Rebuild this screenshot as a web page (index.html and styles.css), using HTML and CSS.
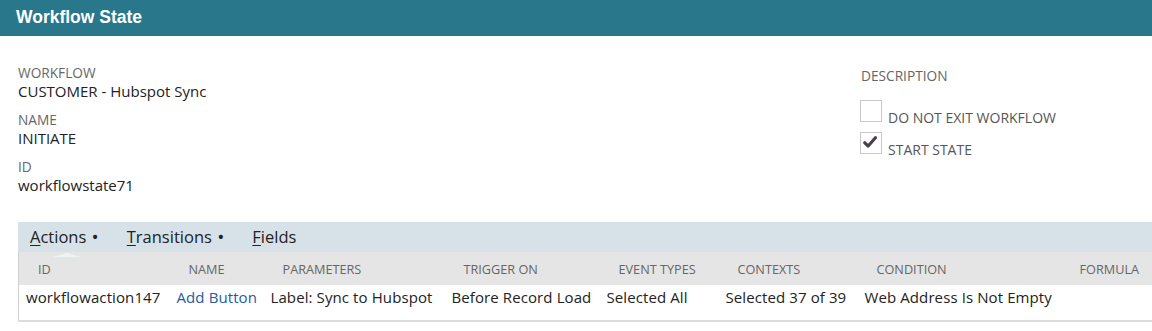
FILE: index.html
```html
<!DOCTYPE html>
<html>
<head>
<meta charset="utf-8">
<link rel="stylesheet" href="styles.css">
</head>
<body>
<div class="titlebar">Workflow State</div>
<div class="fields">
  <div class="col-left">
    <div class="field"><div class="label">WORKFLOW</div><div class="value">CUSTOMER - Hubspot Sync</div></div>
    <div class="field"><div class="label">NAME</div><div class="value">INITIATE</div></div>
    <div class="field"><div class="label">ID</div><div class="value">workflowstate71</div></div>
  </div>
  <div class="col-right">
    <div class="label desc">DESCRIPTION</div>
    <div class="check-row"><span class="box"></span><span class="check-label">DO NOT EXIT WORKFLOW</span></div>
    <div class="check-row"><span class="box checked"><svg viewBox="0 0 14 12" width="14" height="12"><path d="M1.8 6.8 L5.2 10 L12.4 1.8" fill="none" stroke="#4a3f4c" stroke-width="3.2" stroke-linecap="round" stroke-linejoin="round"/></svg></span><span class="check-label">START STATE</span></div>
  </div>
</div>
<div class="subtabs">
  <div class="tabs">
    <span class="tab active"><u>A</u>ctions <span class="dot">•</span></span>
    <span class="tab"><u>T</u>ransitions <span class="dot">•</span></span>
    <span class="tab"><u>F</u>ields</span>
  </div>
  <table class="grid">
    <colgroup>
      <col class="c1"><col class="c2"><col class="c3"><col class="c4"><col class="c5"><col class="c6"><col class="c7"><col class="c8">
    </colgroup>
    <thead>
      <tr>
        <th>ID</th>
        <th>NAME</th>
        <th>PARAMETERS</th>
        <th>TRIGGER ON</th>
        <th>EVENT TYPES</th>
        <th>CONTEXTS</th>
        <th>CONDITION</th>
        <th>FORMULA</th>
      </tr>
    </thead>
    <tbody>
      <tr>
        <td>workflowaction147</td>
        <td><a class="link">Add Button</a></td>
        <td>Label: Sync to Hubspot</td>
        <td>Before Record Load</td>
        <td>Selected All</td>
        <td>Selected 37 of 39</td>
        <td>Web Address Is Not Empty</td>
        <td></td>
      </tr>
    </tbody>
  </table>
</div>
</body>
</html>
```

FILE: styles.css
```css
html, body {
  margin: 0;
  padding: 0;
  background: #ffffff;
  overflow: hidden;
}
body {
  font-family: "Open Sans", "Noto Sans", sans-serif;
  color: #222222;
}
.titlebar {
  height: 36px;
  box-sizing: border-box;
  background: #28778a;
  color: #ffffff;
  font-family: "Liberation Sans", Arial, sans-serif;
  font-weight: bold;
  font-size: 17.5px;
  line-height: 34px;
  padding-left: 16px;
}
.fields {
  display: flex;
  padding: 28px 0 0 18px;
  height: 158px;
  box-sizing: border-box;
}
.col-left {
  width: 843px;
  display: flex;
  flex-direction: column;
  gap: 10px;
}
.label {
  font-size: 13.7px;
  line-height: 17px;
  color: #666666;
}
.value {
  font-size: 15px;
  line-height: 19px;
  color: #222222;
  margin-top: 1px;
}
.col-right {
  display: flex;
  flex-direction: column;
}
.desc {
  margin-top: 3px;
  margin-bottom: 17px;
}
.check-row {
  display: flex;
  align-items: flex-end;
  height: 21px;
  margin-bottom: 11px;
  margin-left: -1px;
}
.box {
  width: 20px;
  height: 20px;
  border: 1px solid #c8c8c8;
  background: #ffffff;
  display: flex;
  align-items: center;
  justify-content: center;
  margin-right: 6px;
}
.box svg {
  margin-top: -3px;
  margin-left: -2px;
}
.check-label {
  font-size: 14px;
  line-height: 14px;
  color: #555555;
  margin-bottom: -3px;
}
.subtabs {
  margin-left: 18px;
  margin-top: 28px;
}
.tabs {
  height: 30px;
  background: #d6e2e8;
  display: flex;
  align-items: center;
  padding-left: 12px;
  gap: 28px;
  box-sizing: border-box;
}
.tab {
  position: relative;
  font-size: 16.5px;
  color: #222222;
  line-height: 20px;
  margin-top: -1px;
}
.tab .dot {
  font-size: 19px;
  margin-left: 1px;
  vertical-align: -1px;
}
.tab u {
  text-underline-offset: 2px;
}
.tab.active::after {
  content: "";
  position: absolute;
  left: 37px;
  bottom: -10px;
  width: 0;
  height: 0;
  border-left: 14px solid transparent;
  border-right: 14px solid transparent;
  border-bottom: 4px solid #eef3f5;
  transform: translateX(-50%);
}
.grid {
  width: 1134px;
  table-layout: fixed;
  border-collapse: collapse;
  border-left: 1px solid #d0d0d0;
  border-bottom: 2px solid #dcdcdc;
}
.grid th {
  background: #e5e5e5;
  height: 33px;
  font-weight: normal;
  font-size: 12.7px;
  color: #666666;
  text-align: left;
  padding: 0 0 0 19px;
  white-space: nowrap;
  overflow: visible;
}
.grid td {
  height: 33px;
  font-size: 15px;
  padding: 2px 0 0 7px;
  white-space: nowrap;
  vertical-align: top;
  line-height: 20px;
  letter-spacing: 0.1px;
}
.c1 { width: 151px; }
.c2 { width: 94px; }
.c3 { width: 181px; }
.c4 { width: 155px; }
.c5 { width: 119px; }
.c6 { width: 139px; }
.c7 { width: 203px; }
.link {
  color: #255ca0;
  text-decoration: none;
}
```
